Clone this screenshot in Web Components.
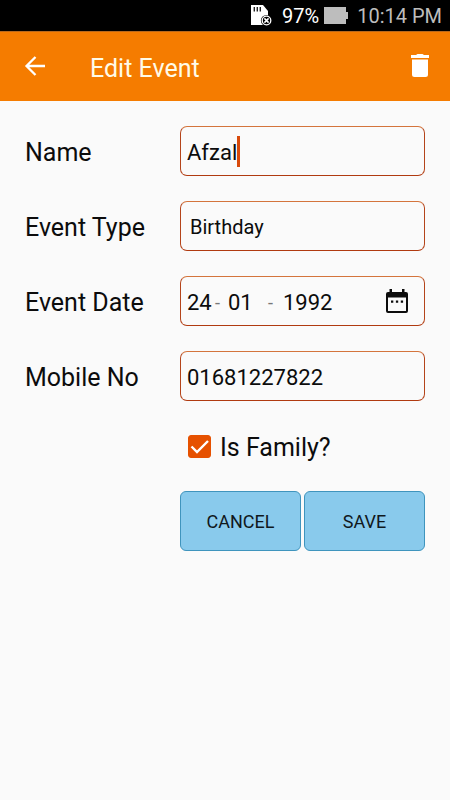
<!DOCTYPE html>
<html lang="en">
<head>
<meta charset="utf-8">
<meta name="viewport" content="width=device-width, initial-scale=1">
<title>Edit Event</title>
<style>
  body { margin: 0; background: #fafafa; color: #0c0c0c; font-family: Roboto, "Noto Sans", sans-serif; }
</style>
</head>
<body>
<event-app></event-app>
<script>
const define = (name, markup, setup) => {
  const template = document.createElement('template');
  template.innerHTML = markup;
  customElements.define(name, class extends HTMLElement {
    constructor() {
      super();
      this.attachShadow({ mode: 'open' }).append(template.content.cloneNode(true));
    }
    connectedCallback() { if (setup) setup(this, this.shadowRoot); }
  });
};

const fieldStyle = `
  :host { display: grid; grid-template-columns: 155px 1fr; align-items: center; }
  label { font-size: 25px; line-height: 30px; padding-top: 4px; white-space: nowrap; }
  .box { display: flex; align-items: center; height: 50px; box-sizing: border-box; min-width: 0;
    padding: 0 16px 0 6px; border: 1px solid; border-color: #d4743c #b4441a #b03a10 #b4441a; border-radius: 7px; }
  input, select { appearance: none; font: inherit; font-size: 22px; line-height: 30px; color: inherit;
    background: none; border: 0; padding: 2px 0 0; margin: 0; outline: 0; min-width: 0; height: 32px; box-sizing: border-box; }
`;

define('status-bar', `
  <style>
    :host { display: flex; align-items: center; justify-content: flex-end; height: 31px; padding-right: 8px;
      background: #000; color: #fff; font-size: 20px; line-height: 24px; }
    .card { margin-right: 10px; }
    .battery { margin: 0 9px 0 5px; }
    time { color: #bdbdbd; }
    svg { display: block; }
  </style>
  <svg class="card" width="21" height="21" viewBox="0 0 21 21" aria-hidden="true">
    <path fill="#fff" d="M0 0h12l5 6v14H0z"/>
    <path stroke="#222" stroke-width="1.4" d="M3.3 2v4.5M6.3 2v4.5M9.3 2v4.5"/>
    <circle cx="15.5" cy="15.5" r="5.6" fill="#000"/>
    <circle cx="15.5" cy="15.5" r="4.3" fill="none" stroke="#fff" stroke-width="1.3"/>
    <path stroke="#fff" stroke-width="1.5" d="M13.4 13.4l4.2 4.2m0-4.2l-4.2 4.2"/>
  </svg>
  <span>97%</span>
  <svg class="battery" width="24" height="17" viewBox="0 0 24 17" aria-hidden="true">
    <path fill="#bdbdbd" d="M0 0h22v5h2v7h-2v5H0z"/>
  </svg>
  <time>10:14 PM</time>
`);

define('app-bar', `
  <style>
    :host { display: flex; align-items: center; height: 70px; box-sizing: border-box; padding: 0 18px 2px 23px;
      background: #f57c00; color: #fffbe8; border-top: 1px solid #b9691c; }
    button { border: 0; padding: 0; background: none; color: #fff; }
    svg { display: block; }
    h1 { flex: 1; margin: 0; padding: 6px 0 0 43px; font-size: 25px; line-height: 30px; font-weight: 400; }
  </style>
  <button type="button" aria-label="Back">
    <svg width="24" height="24" viewBox="0 0 24 24"><path fill="none" stroke="currentColor" stroke-width="2.3" d="M22 12H4M12.5 3L3.5 12l9 9"/></svg>
  </button>
  <h1><slot></slot></h1>
  <button type="button" aria-label="Delete">
    <svg width="24" height="24" viewBox="0 0 24 24"><path fill="currentColor" d="M4 5.5h16V20.500q0 2.500-2.500 2.500h-11q-2.500 0-2.500-2.500zM3 1h5l1.500-1h5L16 1h5v3H3z"/></svg>
  </button>
`);

define('text-field', `
  <style>${fieldStyle}
    input { flex: 1; }
    .caret { display: none; width: 3px; height: 31px; background: #d84a0c; }
    :host([active]) input { flex: none; field-sizing: content; }
    :host([active]) .caret { display: block; }
  </style>
  <label for="value"></label>
  <div class="box"><input id="value"><span class="caret"></span></div>
`, (host, root) => {
  const input = root.querySelector('input');
  root.querySelector('label').textContent = host.getAttribute('label');
  input.type = host.getAttribute('type') || 'text';
  input.value = host.getAttribute('value');
});

define('select-field', `
  <style>${fieldStyle}
    .box { padding-left: 9px; }
    select { flex: 1; font-size: 20px; }
  </style>
  <label for="value"></label>
  <div class="box"><select id="value"></select></div>
`, (host, root) => {
  root.querySelector('label').textContent = host.getAttribute('label');
  root.querySelector('select').replaceChildren(...host.getAttribute('options').split(',').map(text => new Option(text)));
});

define('date-field', `
  <style>${fieldStyle}
    .day { width: 28px; }
    .month { width: 40px; }
    .year { flex: 1; }
    span { width: 13px; padding-top: 2px; font-size: 18px; color: #777; }
    .wide { width: 15px; }
    button { border: 0; padding: 0; background: none; color: #0c0c0c; }
    svg { display: block; }
  </style>
  <label for="day"></label>
  <div class="box">
    <input id="day" class="day" value="24"><span>-</span>
    <input class="month" aria-label="Month" value="01"><span class="wide">-</span>
    <input class="year" aria-label="Year" value="1992">
    <button type="button" aria-label="Choose date">
      <svg width="22" height="24" viewBox="0 0 22 24">
        <path fill="currentColor" fill-rule="evenodd" d="M3.500 0h2.500v3h10V0h2.500v3h1.500q2 0 2 2v17q0 2-2 2h-18Q0 24 0 22v-17Q0 3 2 3H3.500zM2 8.500v13.500h18V8.500z"/>
        <path fill="currentColor" d="M5 11.500h2.300v2.300H5zm4.900 0h2.300v2.300H9.900zm4.900 0h2.300v2.300h-2.300z"/>
      </svg>
    </button>
  </div>
`, (host, root) => {
  root.querySelector('label').textContent = host.getAttribute('label');
});

define('check-field', `
  <style>
    :host { display: flex; height: 40px; padding-left: 163px; align-items: center; }
    label { display: flex; align-items: center; gap: 8px; font-size: 25px; line-height: 30px; }
    .mark { display: grid; padding-right: 1px; }
    input, svg { grid-area: 1 / 1; width: 23px; height: 23px; margin: 0; }
    input { appearance: none; border: 1px solid #e65100; border-radius: 3px; box-sizing: border-box; }
    input:checked { background: #e65100; }
    svg { pointer-events: none; visibility: hidden; }
    input:checked + svg { visibility: visible; }
    .text { padding-top: 3px; }
  </style>
  <label>
    <span class="mark">
      <input type="checkbox" checked>
      <svg viewBox="0 0 23 23"><path fill="none" stroke="#fff" stroke-width="2.400" d="M3.500 11.500l5.500 5.500L20 6"/></svg>
    </span>
    <span class="text"><slot></slot></span>
  </label>
`);

define('action-button', `
  <style>
    :host { display: block; flex: 1; }
    button { display: block; width: 100%; height: 60px; border: 1px solid #3f94bd; border-radius: 6px;
      padding: 2px 0 0; background: #89caec; color: #10181c; font: inherit; font-size: 18px; line-height: 24px; }
  </style>
  <button type="button"><slot></slot></button>
`);

define('event-app', `
  <style>
    :host { display: block; min-height: 100vh; background: #fafafa; }
    form { display: flex; flex-direction: column; gap: 25px; padding: 25px; }
    .actions { display: flex; gap: 3px; padding-left: 155px; }
  </style>
  <status-bar></status-bar>
  <app-bar>Edit Event</app-bar>
  <form>
    <text-field label="Name" value="Afzal" active></text-field>
    <select-field label="Event Type" options="Birthday,Anniversary"></select-field>
    <date-field label="Event Date"></date-field>
    <text-field label="Mobile No" type="tel" value="01681227822"></text-field>
    <check-field>Is Family?</check-field>
    <div class="actions">
      <action-button>CANCEL</action-button>
      <action-button>SAVE</action-button>
    </div>
  </form>
`);
</script>
</body>
</html>
